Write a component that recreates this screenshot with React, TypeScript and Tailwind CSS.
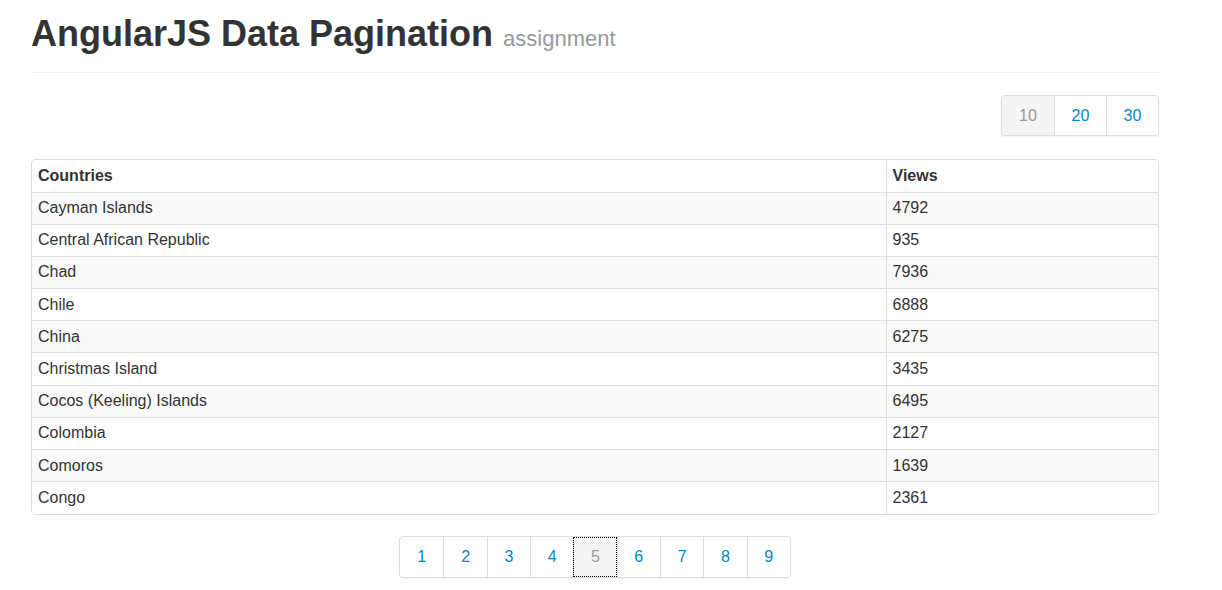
import React, { useState } from 'react';

const rows: [string, number][] = [
  ['Cayman Islands', 4792],
  ['Central African Republic', 935],
  ['Chad', 7936],
  ['Chile', 6888],
  ['China', 6275],
  ['Christmas Island', 3435],
  ['Cocos (Keeling) Islands', 6495],
  ['Colombia', 2127],
  ['Comoros', 1639],
  ['Congo', 2361],
];

const sizes = [10, 20, 30];
const pages = [1, 2, 3, 4, 5, 6, 7, 8, 9];

const App: React.FC = () => {
  const [size, setSize] = useState(10);
  const [page, setPage] = useState(5);

  return (
    <div
      className="min-h-screen bg-white text-[#333]"
      style={{ fontFamily: '"Liberation Sans", Arial, sans-serif' }}
    >
      <div className="ml-[31px] w-[1128px]">
        <div className="pb-[9px] border-b border-[#eee]">
          <h1 className="mt-[14px] mb-[9px] text-[36px] leading-[40px] font-bold text-[#333]">
            AngularJS Data Pagination{' '}
            <small className="text-[22px] leading-none font-normal text-[#999]">assignment</small>
          </h1>
        </div>

        <div className="flex justify-end mt-[22px]">
          <div className="flex rounded-[4px] border border-[#ddd] shadow-[0_1px_2px_rgba(0,0,0,0.05)] overflow-hidden">
            {sizes.map((s, i) => (
              <button
                key={s}
                onClick={() => setSize(s)}
                className={`w-[52px] h-[39px] flex items-center justify-center text-[16px] ${
                  i > 0 ? 'border-l border-[#ddd]' : ''
                } ${s === size ? 'bg-[#f5f5f5] text-[#999]' : 'bg-white text-[#0088cc]'}`}
              >
                {s}
              </button>
            ))}
          </div>
        </div>

        <div className="mt-[23px] border border-[#ddd] rounded-[4px] overflow-hidden">
          <table className="w-full border-collapse text-[16px]">
            <thead>
              <tr className="bg-white">
                <th className="w-[854px] text-left font-bold px-[6px] h-[32px] leading-[22px]">
                  Countries
                </th>
                <th className="text-left font-bold px-[6px] border-l border-[#ddd]">Views</th>
              </tr>
            </thead>
            <tbody>
              {rows.map(([name, views], i) => (
                <tr key={name} className={i % 2 === 0 ? 'bg-[#f9f9f9]' : 'bg-white'}>
                  <td className="px-[6px] h-[32.2px] leading-[22px] border-t border-[#ddd]">{name}</td>
                  <td className="px-[6px] border-t border-l border-[#ddd]">{views}</td>
                </tr>
              ))}
            </tbody>
          </table>
        </div>

        <div className="flex justify-center mt-[21px]">
          <div className="flex rounded-[4px] border border-[#ddd] shadow-[0_1px_2px_rgba(0,0,0,0.05)]">
            {pages.map((p, i) => (
              <button
                key={p}
                onClick={() => setPage(p)}
                className={`w-[43.3px] h-[40px] flex items-center justify-center text-[16px] ${
                  i > 0 ? 'border-l border-[#ddd]' : ''
                } ${
                  p === page
                    ? 'bg-[#f5f5f5] text-[#999] outline outline-1 outline-dotted outline-black -outline-offset-1'
                    : 'bg-white text-[#0088cc]'
                } ${i === 0 ? 'rounded-l-[4px]' : ''} ${i === pages.length - 1 ? 'rounded-r-[4px]' : ''}`}
              >
                {p}
              </button>
            ))}
          </div>
        </div>
      </div>
    </div>
  );
};

export default App;
